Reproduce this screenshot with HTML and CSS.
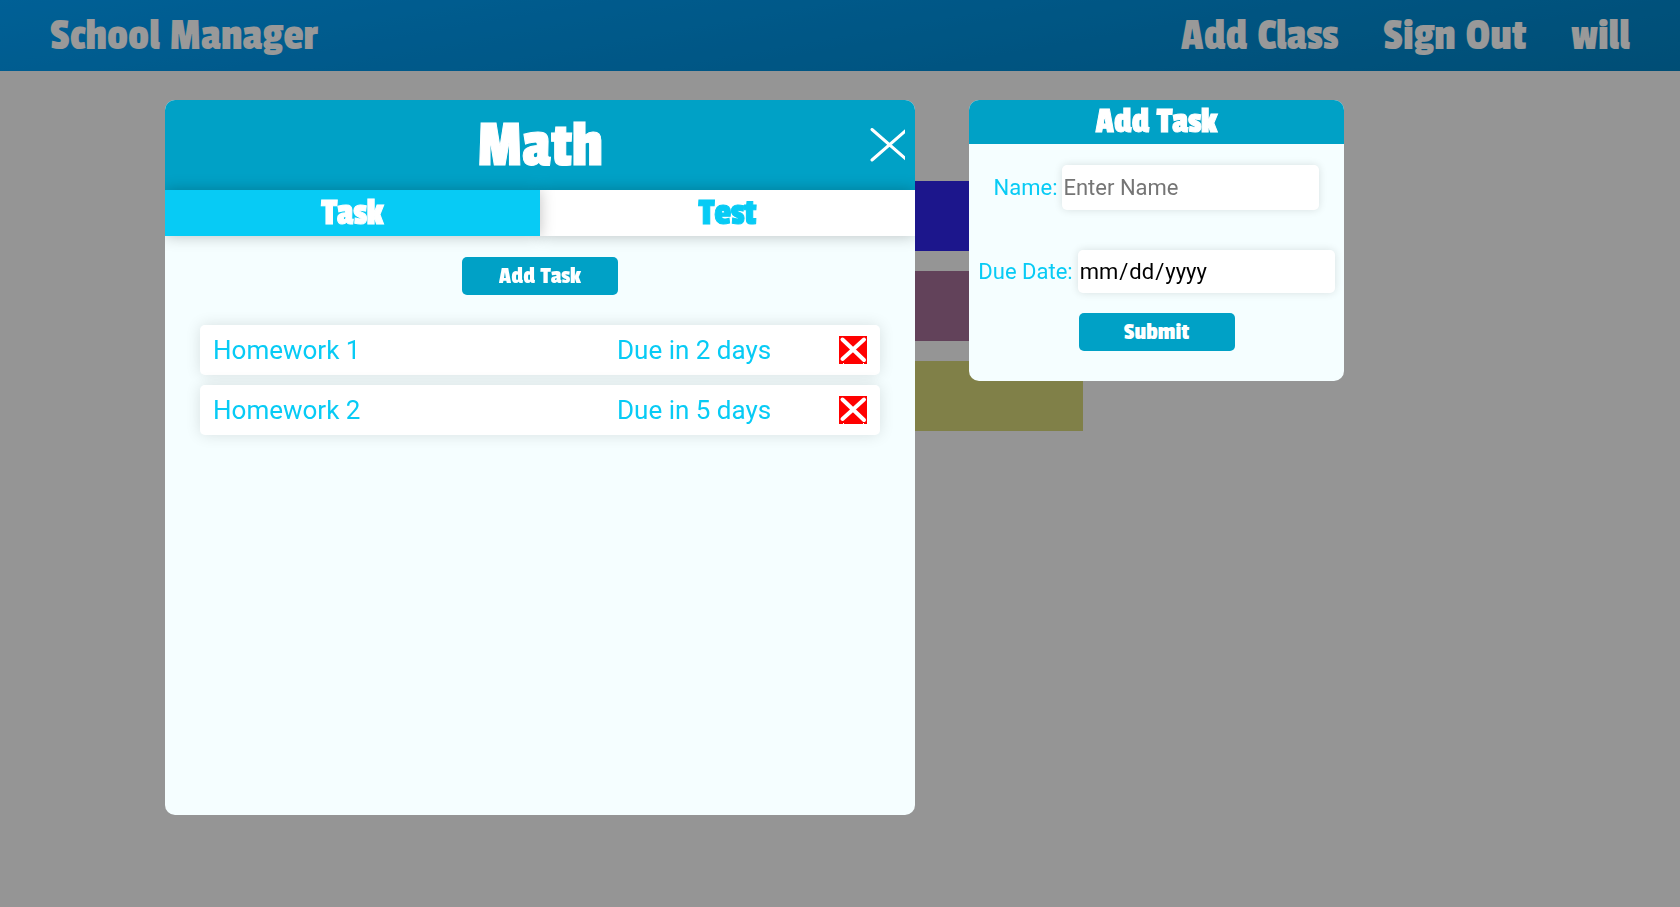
FILE: index.html
```html
<!DOCTYPE html>
<html lang="en">
<head>
<meta charset="utf-8">
<title>School Manager</title>
<link rel="stylesheet" href="styles.css">
</head>
<body>
<header class="site-header">
  <a class="brand" href="#">School Manager</a>
  <nav class="site-nav">
    <a href="#">Add Class</a>
    <a href="#">Sign Out</a>
    <a href="#">will</a>
  </nav>
</header>
<main class="classes">
  <div class="class-card class-blue"></div>
  <div class="class-card class-plum"></div>
  <div class="class-card class-olive"></div>
</main>
<div class="overlay">
  <section class="panel class-panel">
    <div class="class-head">
      <h1>Math</h1>
      <button class="close" type="button" aria-label="Close">
        <svg viewBox="0 0 35 35" width="35" height="35"><path d="M2 1.500 37 32M2 32 37 1.500" fill="none" stroke="#fff" stroke-width="3" stroke-linecap="round"/></svg>
      </button>
    </div>
    <div class="tabs">
      <button class="tab active" type="button">Task</button>
      <button class="tab" type="button">Test</button>
    </div>
    <button class="action" type="button">Add Task</button>
    <ul class="tasks">
      <li class="task">
        <span class="task-name">Homework 1</span>
        <span class="task-due">Due in 2 days</span>
        <button class="remove" type="button" aria-label="Delete Homework 1"><svg viewBox="0 0 28 28" width="28" height="28"><path d="M3.500 3.500 25 24M3.500 23 25 3.500" fill="none" stroke="#fff" stroke-width="4" stroke-linecap="round"/><path d="M4 27.500h1M24 27.500h1" stroke="#fff"/></svg></button>
      </li>
      <li class="task">
        <span class="task-name">Homework 2</span>
        <span class="task-due">Due in 5 days</span>
        <button class="remove" type="button" aria-label="Delete Homework 2"><svg viewBox="0 0 28 28" width="28" height="28"><path d="M3.500 3.500 25 24M3.500 23 25 3.500" fill="none" stroke="#fff" stroke-width="4" stroke-linecap="round"/><path d="M4 27.500h1M24 27.500h1" stroke="#fff"/></svg></button>
      </li>
    </ul>
  </section>
  <form class="panel form-panel">
    <h2>Add Task</h2>
    <div class="field name-field">
      <label for="name">Name:</label>
      <input id="name" type="text" placeholder="Enter Name">
    </div>
    <div class="field date-field">
      <label for="due">Due Date:</label>
      <input id="due" type="date">
    </div>
    <button class="action" type="submit">Submit</button>
  </form>
</div>
</body>
</html>
```
FILE: styles.css
```css
* {
  box-sizing: border-box;
}

body {
  margin: 0;
  min-height: 100vh;
  background: #f8f8f8;
  font-family: Roboto, sans-serif;
}

button,
input {
  border: 0;
  font-family: inherit;
}

.site-header,
h1,
h2,
.tab,
.action {
  font-family: "Passion One", Lato, sans-serif;
  font-weight: 400;
}

h1,
h2,
.tab {
  -webkit-text-stroke: 1px currentColor;
}

.site-header {
  display: flex;
  align-items: center;
  justify-content: space-between;
  height: 71px;
  padding: 0 50px;
  background: linear-gradient(170deg, #00a0fa, #0082c4);
  font-size: 46px;
}

.site-header a {
  color: #fff;
  text-decoration: none;
}

.site-nav {
  display: flex;
  gap: 45px;
}

.classes {
  display: flex;
  flex-direction: column;
  align-items: center;
  gap: 20px;
  padding-top: 110px;
}

.class-card {
  width: 486px;
  height: 70px;
}

.class-blue {
  background: #2f25e9;
}

.class-plum {
  background: #a36e96;
}

.class-olive {
  background: #d5d578;
}

.overlay {
  position: fixed;
  inset: 0;
  display: flex;
  align-items: flex-start;
  gap: 54px;
  padding: 100px 165px;
  background: rgba(0, 0, 0, 0.4);
}

.panel {
  overflow: hidden;
  border-radius: 10px;
  background: #f5feff;
  display: flex;
  flex-direction: column;
  align-items: center;
}

.class-panel {
  flex: 0 1 750px;
  min-height: 715px;
}

.class-head {
  align-self: stretch;
  display: grid;
  grid-template-columns: 45px 1fr 35px;
  align-items: center;
  height: 90px;
  padding-right: 10px;
  background: #00a1c6;
}

h1,
h2 {
  margin: 0;
  color: #fff;
  text-align: center;
}

h1 {
  grid-column: 2;
  padding-top: 4px;
  font-size: 66px;
  line-height: 80px;
}

.close,
.remove {
  padding: 0;
  background: none;
  cursor: pointer;
}

.close svg,
.remove svg {
  display: block;
}

.tabs {
  align-self: stretch;
  display: grid;
  grid-template-columns: 1fr 1fr;
  height: 46px;
}

.tab {
  padding: 0;
  background: #fff;
  box-shadow: 0 0 15px rgba(0, 0, 0, 0.25);
  color: #07cbf5;
  font-size: 38px;
  line-height: 46px;
}

.tab.active {
  position: relative;
  background: #07cbf5;
  color: #fff;
}

.action {
  width: 156px;
  height: 38px;
  padding: 0;
  border-radius: 5px;
  background: #00a1c6;
  color: #fff;
  font-size: 25px;
}

.class-panel .action {
  margin-top: 21px;
}

.tasks {
  align-self: stretch;
  display: flex;
  flex-direction: column;
  gap: 10px;
  margin: 30px 35px;
  padding: 0;
  list-style: none;
}

.task {
  display: grid;
  grid-template-columns: 1fr 222px 28px;
  align-items: center;
  height: 50px;
  padding: 0 13px;
  border-radius: 5px;
  background: #fff;
  box-shadow: 0 0 15px rgba(0, 0, 0, 0.12);
  color: #07cbf5;
  font-size: 26px;
}

.remove {
  background: #f00;
}

.form-panel {
  flex: 0 1 375px;
  padding-bottom: 30px;
}

h2 {
  align-self: stretch;
  background: #00a1c6;
  font-size: 37px;
  line-height: 44px;
}

.field {
  display: flex;
  align-items: center;
  gap: 5px;
  color: #07cbf5;
  font-size: 22px;
}

.field input {
  width: 257px;
  border-radius: 5px;
  background: #fff;
  box-shadow: 0 0 8px rgba(0, 0, 0, 0.12);
  color: #000;
  font-size: 22px;
}

.name-field {
  margin: 21px 0 40px;
}

.name-field input {
  height: 45px;
  padding: 1px;
}

.name-field input::placeholder {
  color: #757575;
}

.date-field {
  margin-bottom: 20px;
}

.date-field input {
  height: 43px;
  padding: 1px;
}

.date-field input::-webkit-calendar-picker-indicator {
  display: none;
}
```
